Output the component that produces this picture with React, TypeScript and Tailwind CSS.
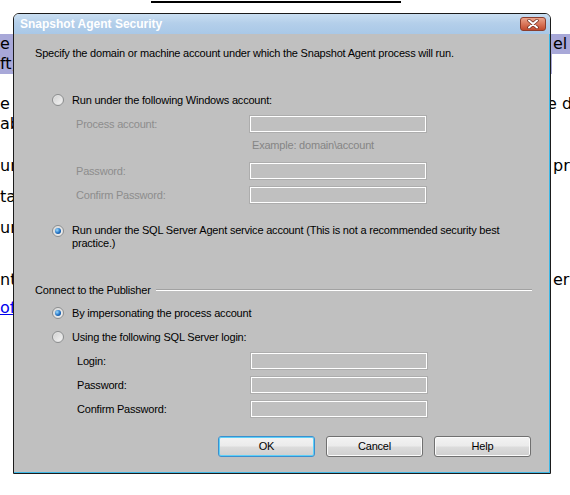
import clsx from 'clsx';

const ui = "font-['Liberation_Sans',Arial,sans-serif] text-[11px] tracking-[-0.2px]";

const pageLines = [
  { top: 'mt-[31px]', left: 'e', right: 'el', mark: 'both', shift: 'w-[552px]' },
  { top: 'mt-0', left: 'ft,', right: '', mark: 'left', shift: 'w-[552px]' },
  { top: 'mt-[20px]', left: 'e', right: 'e d', mark: '', shift: 'w-[546px]' },
  { top: 'mt-0', left: 'ab', right: '', mark: '', shift: 'w-[552px]' },
  { top: 'mt-[22px]', left: 'ur', right: 'pr', mark: '', shift: 'w-[552px]' },
  { top: 'mt-[11px]', left: 'ta', right: '', mark: '', shift: 'w-[552px]' },
  { top: 'mt-[11px]', left: 'ur', right: '', mark: '', shift: 'w-[552px]' },
  { top: 'mt-[32px]', left: 'nta', right: 'er', mark: '', shift: 'w-[552px]' },
  { top: 'mt-[8px]', left: 'of', right: '', mark: 'link', shift: 'w-[552px]' },
];

function Radio({ checked }: { checked?: boolean }) {
  return (
    <span className="flex h-[12px] w-[12px] shrink-0 items-center justify-center rounded-full border border-[#8c8e8f] bg-[linear-gradient(135deg,#cfcfcf,#f6f6f6)] shadow-[inset_0_0_0_1px_#e4e4e4]">
      {checked && (
        <span className="h-[6px] w-[6px] rounded-full bg-[radial-gradient(circle_at_35%_35%,#9ddcff,#1f6fc2_55%,#0b3c7a)]" />
      )}
    </span>
  );
}

function Field() {
  return <div className="h-[18px] w-[178px] border border-[#adadad] shadow-[inset_0_0_0_1px_#ffffff]" />;
}

function FieldRow({ label, dim, top }: { label: string; dim?: boolean; top: string }) {
  return (
    <div className={clsx('ml-[41px] flex h-[18px] items-center', top)}>
      <span className={clsx('w-[173px] shrink-0', dim ? 'text-[#8d8d8d]' : 'text-black')}>{label}</span>
      <Field />
    </div>
  );
}

function Btn({ label, main }: { label: string; main?: boolean }) {
  return (
    <button
      className={clsx(
        'h-[21px] w-[97px] rounded-[3px] border text-black bg-[linear-gradient(#f3f3f3_0%,#ebebeb_48%,#dcdcdc_52%,#cfcfcf_100%)]',
        main ? 'border-[#3b8fcf] shadow-[inset_0_0_0_1px_#5fd0f7]' : 'border-[#707070] shadow-[inset_0_0_0_1px_#fbfbfb]',
      )}
    >
      {label}
    </button>
  );
}

export default function App() {
  return (
    <div className="relative h-[495px] w-[570px] overflow-hidden bg-white">
      <div className="ml-[151px] mt-[1px] h-[2px] w-[250px] bg-black" />

      <div className="font-['DejaVu_Sans',Verdana,sans-serif] text-[16px] text-black">
        {pageLines.map((line, i) => (
          <div key={i} className={clsx('flex h-[20px] items-center overflow-hidden whitespace-nowrap', line.top)}>
            <span
              className={clsx(
                'flex h-[20px] shrink-0 items-center',
                line.shift,
                (line.mark === 'both' || line.mark === 'left') && 'bg-[#a8a8d8]',
                line.mark === 'link' && 'text-[#0000ee] underline',
              )}
            >
              {line.left}
            </span>
            <span className={clsx('flex h-[20px] flex-1 items-center pl-[1px]', line.mark === 'both' && 'bg-[#a8a8d8]')}>
              {line.right}
            </span>
          </div>
        ))}
      </div>

      <div className={clsx('absolute left-[13px] top-[13px] flex h-[461px] w-[538px] flex-col rounded-t-[6px] border border-[#1b1b1b]', ui)}>
        <div className="flex h-[20px] shrink-0 items-center justify-between rounded-t-[5px] bg-[linear-gradient(#cadff2,#b4cfea_45%,#a9c8e7)] pl-[6px] pr-[4px]">
          <span className="text-[12px] font-bold tracking-normal text-white">Snapshot Agent Security</span>
          <span className="flex h-[14px] w-[26px] items-center justify-center rounded-[3px] border border-[#8b3e2e] bg-[linear-gradient(#eaa48c,#d9765a_50%,#c24a2e)]">
            <svg width="12" height="10" viewBox="0 0 12 10">
              <path d="M2 1.5 L10 8.5 M10 1.5 L2 8.5" stroke="#6a2a1c" strokeWidth="3.4" strokeLinecap="round" />
              <path d="M2 1.5 L10 8.5 M10 1.5 L2 8.5" stroke="#ffffff" strokeWidth="2" strokeLinecap="round" />
            </svg>
          </span>
        </div>

        <div className="flex flex-1 flex-col border-b border-r border-[#3fb8e6] bg-[#c0c0c0] pl-[21px] text-black">
          <div className="mt-[12px] flex h-[14px] items-center">
            Specify the domain or machine account under which the Snapshot Agent process will run.
          </div>

          <div className="ml-[17px] mt-[33px] flex h-[14px] items-center gap-[8px]">
            <Radio />
            <span>Run under the following Windows account:</span>
          </div>
          <FieldRow label="Process account:" dim top="mt-[8px]" />
          <div className="ml-[217px] mt-[5px] flex h-[14px] items-center text-[#858585]">Example: domain\account</div>
          <FieldRow label="Password:" dim top="mt-[10px]" />
          <FieldRow label="Confirm Password:" dim top="mt-[6px]" />

          <div className="ml-[17px] mt-[20px] flex items-start gap-[8px]">
            <span className="mt-[1px]">
              <Radio checked />
            </span>
            <span className="w-[440px] leading-[13px]">
              Run under the SQL Server Agent service account (This is not a recommended security best practice.)
            </span>
          </div>

          <div className="mt-[33px] flex h-[14px] items-center pr-[17px]">
            <span>Connect to the Publisher</span>
            <span className="ml-[5px] h-[2px] flex-1 border-b border-t border-b-white border-t-[#a2a2a2]" />
          </div>

          <div className="ml-[17px] mt-[9px] flex h-[14px] items-center gap-[8px]">
            <Radio checked />
            <span>By impersonating the process account</span>
          </div>
          <div className="ml-[17px] mt-[10px] flex h-[14px] items-center gap-[8px]">
            <Radio />
            <span>Using the following SQL Server login:</span>
          </div>
          <div className="ml-[1px]">
            <FieldRow label="Login:" top="mt-[8px]" />
            <FieldRow label="Password:" top="mt-[6px]" />
            <FieldRow label="Confirm Password:" top="mt-[6px]" />
          </div>

          <div className="mr-[18px] mt-[18px] flex justify-end gap-[11px]">
            <Btn label="OK" main />
            <Btn label="Cancel" />
            <Btn label="Help" />
          </div>
        </div>
      </div>
    </div>
  );
}
